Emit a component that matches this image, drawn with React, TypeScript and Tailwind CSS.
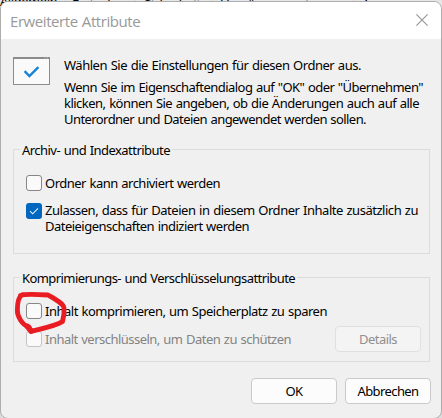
import type { ReactNode } from "react";

function CheckBox({ state }: { state: "on" | "off" | "disabled" }) {
  if (state === "on") {
    return (
      <span className="flex size-4 shrink-0 items-center justify-center rounded-[3px] bg-[#0067c0]">
        <svg viewBox="0 0 10 8" className="h-2 w-2.5" fill="none" stroke="#e8f2fb" strokeWidth="1.1">
          <path d="M1 4.2 3.7 6.8 9 1.4" />
        </svg>
      </span>
    );
  }
  return (
    <span
      className={`size-4 shrink-0 rounded-[3px] border bg-[#fafafa] ${state === "off" ? "border-[#868686]" : "border-[#c4c4c4]"}`}
    />
  );
}

function Group({ title, className, children }: { title: ReactNode; className: string; children: ReactNode }) {
  return (
    <section className={`ml-3 w-[417px] border border-[#dcdcdc] ${className}`}>
      <div className="-mt-2 ml-1.5 flex h-4">
        <h2 className="bg-[#f0f0f0] px-0.5 whitespace-nowrap">{title}</h2>
      </div>
      {children}
    </section>
  );
}

function BackgroundTabs() {
  return (
    <div className="absolute inset-x-0 top-0 h-3 overflow-hidden bg-[#e6e6e6] tracking-[-0.45px] text-black">
      <div className="-mt-1 flex h-4 whitespace-nowrap">
        <span className="w-[66px] border-r border-[#d9d9d9]">
          <span className="-mt-[3px] block">Allgemein</span>
        </span>
        <span className="w-[70px] border-r border-[#d9d9d9] pl-1.5">Freigabe</span>
        <span className="w-[77px] border-r border-[#d9d9d9] pl-2">Sicherheit</span>
        <span className="w-[141px] border-r border-[#d9d9d9] pl-2">Vorgängerversionen</span>
        <span className="grow pl-2">Anpassen</span>
      </div>
    </div>
  );
}

export default function App() {
  return (
    <main className="relative h-[418px] w-[442px] overflow-hidden bg-[#dcdcdc] pt-px font-['Noto_Sans',sans-serif] text-[13px] leading-4 text-black [word-spacing:0.7px]">
      <BackgroundTabs />
      <div className="relative h-[418px] w-[442px] overflow-hidden rounded-[8px] border border-[#adadad] bg-[#f0f0f0]">
        <header className="flex h-[37px] justify-between bg-white">
          <h1 className="mt-[9px] ml-[9px] font-['Open_Sans',sans-serif] text-[15px] leading-5 tracking-[-0.43px] text-[#999999]">
            Erweiterte Attribute
          </h1>
          <svg viewBox="0 0 12 12" className="mt-3 mr-[13px] size-3" stroke="#969696" strokeWidth="1.1">
            <path d="M.4.4 11.6 11.6M11.6.4.4 11.6" />
          </svg>
        </header>

        <div className="flex h-[102px] whitespace-nowrap">
          <div className="mt-[18px] ml-3 h-7 w-[37px] border border-t-2 border-[#8b8b8b] bg-[#fafafa]">
            <svg viewBox="0 0 35 25" className="h-[25px] w-[35px] overflow-visible" fill="none" stroke="#1583d8" strokeWidth="2.4">
              <path d="m10.6 12.2 4.8 4.8 9-8.8" />
              <path d="M30.5-1h1M33-1h1" stroke="#c4c4c4" strokeWidth="1" />
            </svg>
          </div>
          <div className="mt-[18px] ml-[14px]">
            <p className="tracking-[-0.473px]">Wählen Sie die Einstellungen für diesen Ordner aus.</p>
            <p className="mt-1.5 tracking-[-0.534px]">Wenn Sie im Eigenschaftendialog auf "OK" oder "Übernehmen"</p>
            <p className="tracking-[-0.512px]">klicken, können Sie angeben, ob die Änderungen auch auf alle</p>
            <p className="tracking-[-0.572px]">Unterordner und Dateien angewendet werden sollen.</p>
          </div>
        </div>

        <Group className="mt-2 h-[105px]" title={<span className="tracking-[-0.535px]">Archiv- und Indexattribute</span>}>
          <label className="mt-[17px] ml-3 flex gap-[3px]">
            <CheckBox state="off" />
            <span className="tracking-[-0.515px]">Ordner kann archiviert werden</span>
          </label>
          <label className="mt-3 ml-3 flex gap-[3px]">
            <CheckBox state="on" />
            <span className="-mt-px whitespace-nowrap">
              <span className="block tracking-[-0.474px]">Zulassen, dass für Dateien in diesem Ordner Inhalte zusätzlich zu</span>
              <span className="block tracking-[-0.523px]">Dateieigenschaften indiziert werden</span>
            </span>
          </label>
        </Group>

        <Group className="mt-[23px] h-[85px]" title={<span className="tracking-[-0.571px]">Komprimierungs- und Verschlüsselungsattribute</span>}>
          <label className="mt-[17px] ml-3 flex gap-[3px]">
            <CheckBox state="off" />
            <span className="tracking-[-0.495px]">Inhalt komprimieren, um Speicherplatz zu sparen</span>
          </label>
          <div className="mr-2 ml-3 flex items-start justify-between">
            <label className="mt-3 flex gap-[3px] text-[#838383]">
              <CheckBox state="disabled" />
              <span className="tracking-[-0.522px]">Inhalt verschlüsseln, um Daten zu schützen</span>
            </label>
            <button disabled className="mt-[7px] h-[26px] w-[86px] rounded-[4px] border border-[#e0e0e0] bg-[#f4f4f4] tracking-[-0.536px] text-[#8f8f8f]">
              Details
            </button>
          </div>
        </Group>

        <footer className="mt-4 mr-2.5 flex justify-end gap-2">
          <button className="h-[26px] w-[86px] rounded-[4px] border border-[#cacaca] bg-[#fcfcfc] tracking-[-0.5px]">OK</button>
          <button className="h-[26px] w-[86px] rounded-[4px] border border-[#cacaca] bg-[#fcfcfc] tracking-[-0.599px]">Abbrechen</button>
        </footer>
      </div>

      <svg viewBox="0 0 60 50" className="pointer-events-none absolute top-[288px] left-[10px] h-[50px] w-[60px]" fill="none" stroke="#e81c22" strokeWidth="4.8" strokeLinecap="round" strokeLinejoin="round">
        <path d="M10.5 7.4C15 5.6 32 6.6 38 7 45 11 53.5 15.5 54 20 54.5 25 54 28 52.5 33.5 46 38 32 40.5 21 43.3L19 39C12 37 7 28 7.4 22 7.4 14 9 8 13 6.6" />
        <path d="M17.5 38.5 21 43" strokeWidth="5.6" />
      </svg>
    </main>
  );
}
